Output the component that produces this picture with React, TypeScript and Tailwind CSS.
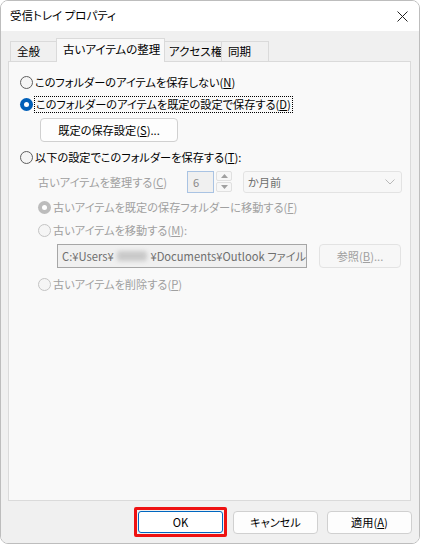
import React from "react";

const font = "[font-family:'Noto_Sans_CJK_JP',sans-serif] [font-feature-settings:'palt']";

function Radio({ checked = false, disabled = false }: { checked?: boolean; disabled?: boolean }) {
  if (checked) {
    return (
      <span
        className={`flex h-[13px] w-[13px] shrink-0 items-center justify-center rounded-full ${
          disabled ? "bg-[#bcbcbc]" : "bg-[#005fb8]"
        }`}
      >
        <span className="h-[5px] w-[5px] rounded-full bg-white" />
      </span>
    );
  }
  return (
    <span
      className={`h-[13px] w-[13px] shrink-0 rounded-full border bg-[#f5f5f5] ${
        disabled ? "border-[#c4c4c4]" : "border-[#5f5f5f]"
      }`}
    />
  );
}

function Button({ children, disabled = false, className = "" }: { children: React.ReactNode; disabled?: boolean; className?: string }) {
  return (
    <div
      className={`flex items-center justify-center rounded-[4px] border ${
        disabled ? "border-[#e3e3e3] bg-[#f7f7f7] text-[#a0a0a0]" : "border-[#d0d0d0] bg-[#fdfdfd] text-black"
      } ${className}`}
    >
      {children}
    </div>
  );
}

export default function App() {
  const dis = "text-[#a0a0a0]";
  return (
    <div className={`h-[544px] w-[421px] bg-white text-[11.2px] ${font}`}>
      <div className="flex h-[544px] w-[420px] flex-col overflow-hidden rounded-[8px] border border-[#bdbdbd]">
        {/* title bar */}
        <div className="flex h-[30px] shrink-0 items-center justify-between bg-white pl-[9px] pr-[10px]">
          <span className="text-[11.5px] text-black">受信トレイ プロパティ</span>
          <svg width="11" height="11" viewBox="0 0 11 11" className="mr-[1px]">
            <path d="M0.5 0.5 L10.5 10.5 M10.5 0.5 L0.5 10.5" stroke="#222" strokeWidth="1" />
          </svg>
        </div>

        <div className="flex flex-1 flex-col bg-[#f0f0f0] px-[7px] pt-[7px]">
          {/* tabs */}
          <div className="relative z-10 -mb-px flex h-[24px] items-end pl-[2px] text-[11.5px] text-black">
            <div className="flex h-[21px] w-[47px] items-center whitespace-nowrap border border-[#dadada] bg-[#f0f0f0] pl-[6px]">全般</div>
            <div className="-ml-px flex h-[24px] w-[109px] items-center whitespace-nowrap border border-b-0 border-[#dadada] bg-[#f9f9f9] pb-[1px] pl-[6px]">
              古いアイテムの整理
            </div>
            <div className="-ml-px flex h-[21px] w-[58px] items-center whitespace-nowrap border border-[#dadada] bg-[#f0f0f0] pl-[4px]">
              アクセス権
            </div>
            <div className="-ml-px flex h-[21px] w-[48px] items-center whitespace-nowrap border border-[#dadada] bg-[#f0f0f0] pl-[6px]">
              同期
            </div>
          </div>

          {/* panel */}
          <div className="flex h-[440px] w-[403px] flex-col whitespace-nowrap border border-[#dadada] bg-[#f9f9f9] pl-[11px] pt-[9px] text-black">
            <div className="flex h-[22px] items-center gap-[2px]">
              <Radio />
              <span>
                このフォルダーのアイテムを保存しない(<u>N</u>)
              </span>
            </div>
            <div className="flex h-[22px] items-center gap-[1px]">
              <Radio checked />
              <span className="border border-dotted border-black px-px leading-[15px]">
                このフォルダーのアイテムを既定の設定で保存する(<u>D</u>)
              </span>
            </div>
            <Button className="ml-[20px] mt-[3px] h-[24px] w-[138px]">
              既定の保存設定(<u>S</u>)...
            </Button>
            <div className="mt-[4px] flex h-[22px] items-center gap-[2px]">
              <Radio />
              <span>
                以下の設定でこのフォルダーを保存する(<u>T</u>):
              </span>
            </div>

            <div className="mt-[3px] flex h-[22px] items-center">
              <span className={`ml-[18px] w-[149px] ${dis}`}>
                古いアイテムを整理する(<u>C</u>)
              </span>
              <div className="flex h-[22px] w-[27px] items-center border border-[#a9c3e3] bg-[#f0f0f0] pl-[5px] text-[#8a8a8a]">
                6
              </div>
              <div className="ml-[2px] flex h-[22px] w-[16px] flex-col gap-[1px]">
                <div className="flex h-[10px] items-center justify-center rounded-[2px] border border-[#e0e0e0] bg-[#f7f7f7]">
                  <svg width="7" height="4" viewBox="0 0 7 4">
                    <path d="M0 4 L3.5 0 L7 4 Z" fill="#a0a0a0" />
                  </svg>
                </div>
                <div className="flex h-[10px] items-center justify-center rounded-[2px] border border-[#e0e0e0] bg-[#f7f7f7]">
                  <svg width="7" height="4" viewBox="0 0 7 4">
                    <path d="M0 0 L3.5 4 L7 0 Z" fill="#a0a0a0" />
                  </svg>
                </div>
              </div>
              <div className="ml-[11px] flex h-[22px] w-[159px] items-center justify-between rounded-[3px] border border-[#e3e3e3] bg-[#f7f7f7] pl-[4px] pr-[6px] text-[#6e6e6e]">
                <span>か月前</span>
                <svg width="10" height="6" viewBox="0 0 10 6">
                  <path d="M0.5 0.5 L5 5 L9.5 0.5" stroke="#b8b8b8" strokeWidth="1" fill="none" />
                </svg>
              </div>
            </div>

            <div className={`ml-[18px] mt-[3px] flex h-[22px] items-center gap-[2px] ${dis}`}>
              <Radio checked disabled />
              <span>
                古いアイテムを既定の保存フォルダーに移動する(<u>F</u>)
              </span>
            </div>
            <div className={`ml-[18px] mt-[1px] flex h-[22px] items-center gap-[2px] ${dis}`}>
              <Radio disabled />
              <span>
                古いアイテムを移動する(<u>M</u>):
              </span>
            </div>
            <div className="mt-[3px] flex h-[24px] items-center">
              <div className="ml-[37px] flex h-[24px] w-[250px] items-center overflow-hidden border border-[#a6a6a6] bg-[#f0f0f0] pl-[4px] text-[#6e6e6e]">
                C:¥Users¥
                <span className="mx-[3px] inline-block h-[10px] w-[32px] rounded-[3px] bg-[#c9c9c9] blur-[2px]" />
                ¥Documents¥Outlook ファイル
              </div>
              <Button disabled className="ml-[12px] h-[24px] w-[82px]">
                参照(<u>B</u>)...
              </Button>
            </div>
            <div className={`ml-[18px] mt-[5px] flex h-[22px] items-center gap-[2px] ${dis}`}>
              <Radio disabled />
              <span>
                古いアイテムを削除する(<u>P</u>)
              </span>
            </div>
          </div>

          {/* bottom buttons */}
          <div className="mt-[6px] flex items-start pl-[126px]">
            <div className="rounded-[2px] border-[3px] border-[#ee1111] p-px">
              <div className="flex h-[22px] w-[85px] items-center justify-center rounded-[3px] border border-[#0067c0] bg-white text-black">
                OK
              </div>
            </div>
            <Button className="ml-[6px] mt-[4px] h-[23px] w-[85px]">キャンセル</Button>
            <Button className="ml-[9px] mt-[4px] h-[23px] w-[85px]">
              適用(<u>A</u>)
            </Button>
          </div>
        </div>
      </div>
    </div>
  );
}
